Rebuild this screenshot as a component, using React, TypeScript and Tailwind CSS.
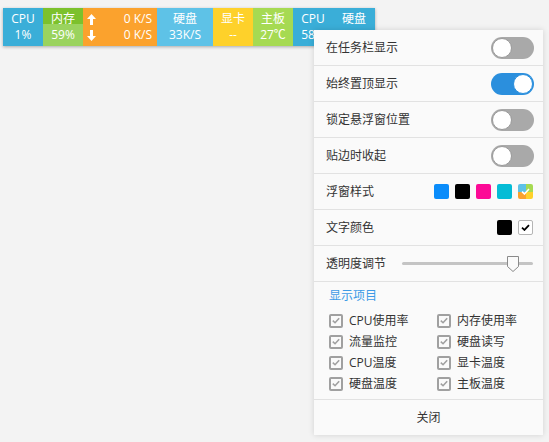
import { useState } from 'react';

const FONT = "font-['Open_Sans','Noto_Sans_CJK_SC',sans-serif]";

const SWATCHES = ['bg-[#0a8cfa]', 'bg-[#000000]', 'bg-[#fc0a96]', 'bg-[#05bcd6]'];

const ITEMS = [
  ['CPU使用率', '内存使用率'],
  ['流量监控', '硬盘读写'],
  ['CPU温度', '显卡温度'],
  ['硬盘温度', '主板温度'],
];

function Toggle({ on }: { on: boolean }) {
  return (
    <div
      className={`relative w-[43px] h-[22px] rounded-full ${on ? 'bg-[#2b8fdd]' : 'bg-[#a9a9a9]'}`}
    >
      <div
        className={`absolute top-[1px] w-[20px] h-[20px] rounded-full bg-white border ${
          on ? 'right-[1px] border-[#2b8fdd]' : 'left-[1px] border-[#9a9a9a]'
        }`}
      />
    </div>
  );
}

function Check({ className = '', width = 1.8 }: { className?: string; width?: number }) {
  return (
    <svg viewBox="0 0 10 8" className={className} fill="none" stroke="currentColor" strokeWidth={width}>
      <path d="M1 4.2 L3.8 6.8 L9 1.2" />
    </svg>
  );
}

function Row({ label, children }: { label: string; children: React.ReactNode }) {
  return (
    <div className="h-[36px] border-b border-[#e2e2e2] flex items-center justify-between pl-3 pr-[9px]">
      <span>{label}</span>
      {children}
    </div>
  );
}

function Arrow({ up }: { up: boolean }) {
  return (
    <svg viewBox="0 0 9 11" className={`w-[9px] h-[11px] ${up ? '' : 'rotate-180'}`} fill="white">
      <path d="M4.5 0 L9 5 H6 V11 H3 V5 H0 Z" />
    </svg>
  );
}

function Tile({ color, top, bottom, w }: { color: string; top: string; bottom: string; w: string }) {
  return (
    <div className={`${color} ${w} flex flex-col items-center justify-center leading-[16px]`}>
      <span>{top}</span>
      <span className="h-[16px]">{bottom}</span>
    </div>
  );
}

export default function App() {
  const [memory] = useState(59);

  return (
    <div className={`relative w-[549px] h-[442px] bg-[#f3f3f3] overflow-hidden text-[12px] ${FONT}`}>
      {/* floating bar */}
      <div className="ml-[3px] mt-[8px] flex h-[38px] w-max text-white shadow-[0_1px_3px_rgba(0,0,0,0.3)]">
        <Tile color="bg-[#3aaed8]" w="w-[40px]" top="CPU" bottom="1%" />
        <div className="relative w-[40px] bg-[#7cc12c] flex flex-col items-center justify-center leading-[16px]">
          <div className="absolute inset-x-0 bottom-0 bg-[#9ad35e]" style={{ height: `${memory}%` }} />
          <span className="relative">内存</span>
          <span className="relative">{memory}%</span>
        </div>
        <div className="w-[74px] bg-[#fba22d] flex flex-col justify-center pl-[4px] pr-[5px] leading-[16px]">
          <div className="flex items-center justify-between">
            <Arrow up />
            <span>0 K/S</span>
          </div>
          <div className="flex items-center justify-between">
            <Arrow up={false} />
            <span>0 K/S</span>
          </div>
        </div>
        <Tile color="bg-[#5ec2e7]" w="w-[56px]" top="硬盘" bottom="33K/S" />
        <Tile color="bg-[#fed12a]" w="w-[40px]" top="显卡" bottom="--" />
        <Tile color="bg-[#a6da52]" w="w-[40px]" top="主板" bottom="27℃" />
        <Tile color="bg-[#3aaed8]" w="w-[40px]" top="CPU" bottom="58%" />
        <Tile color="bg-[#3aaed8]" w="w-[42px]" top="硬盘" bottom="" />
      </div>

      {/* settings menu */}
      <div className="absolute left-[314px] top-[30px] w-[229px] bg-[#fafafa] text-[#333] shadow-[0_0_6px_rgba(0,0,0,0.14)]">
        <Row label="在任务栏显示">
          <Toggle on={false} />
        </Row>
        <Row label="始终置顶显示">
          <Toggle on />
        </Row>
        <Row label="锁定悬浮窗位置">
          <Toggle on={false} />
        </Row>
        <Row label="贴边时收起">
          <Toggle on={false} />
        </Row>
        <Row label="浮窗样式">
          <div className="flex gap-[6px] mr-[1px]">
            {SWATCHES.map((c) => (
              <div key={c} className={`w-[15px] h-[15px] rounded-[2px] ${c}`} />
            ))}
            <div className="relative w-[15px] h-[15px] rounded-[2px] overflow-hidden grid grid-cols-2 grid-rows-2">
              <div className="bg-[#5ec2e7]" />
              <div className="bg-[#a6da52]" />
              <div className="bg-[#fba22d]" />
              <div className="bg-[#fed12a]" />
              <Check className="absolute left-[3px] top-[4px] w-[9px] h-[7px] text-white" />
            </div>
          </div>
        </Row>
        <Row label="文字颜色">
          <div className="flex gap-[6px] mr-[1px]">
            <div className="w-[15px] h-[15px] rounded-[2px] bg-black" />
            <div className="w-[15px] h-[15px] rounded-[2px] bg-white border border-[#b5b5b5] flex items-center justify-center">
              <Check className="w-[9px] h-[7px] text-black" width={2} />
            </div>
          </div>
        </Row>
        <Row label="透明度调节">
          <div className="relative w-[131px] h-[18px] mr-[1px] flex items-center">
            <div className="w-full h-[3px] rounded-full bg-[#c4c4c4]" />
            <svg viewBox="0 0 14 18" className="absolute left-[104px] top-0 w-[14px] h-[18px]">
              <path d="M1.5 1.5 H12.5 V11.5 L7 16.5 L1.5 11.5 Z" fill="#fafafa" stroke="#8a8a8a" strokeWidth={1} />
            </svg>
          </div>
        </Row>

        <div className="border-b border-[#e2e2e2] pl-[15px] pt-[5px] pb-[5px]">
          <div className="leading-[18px] text-[#3d9be6]">显示项目</div>
          <div className="mt-[5px] grid grid-cols-[108px_1fr]">
            {ITEMS.flat().map((label) => (
              <div key={label} className="h-[21px] flex items-center gap-[6px]">
                <div className="w-[14px] h-[14px] rounded-[2px] border-2 border-[#a0a0a0] flex items-center justify-center">
                  <Check className="w-[8px] h-[7px] text-[#a0a0a0]" width={2} />
                </div>
                <span>{label}</span>
              </div>
            ))}
          </div>
        </div>

        <div className="h-[35px] flex items-center justify-center">关闭</div>
      </div>
    </div>
  );
}
